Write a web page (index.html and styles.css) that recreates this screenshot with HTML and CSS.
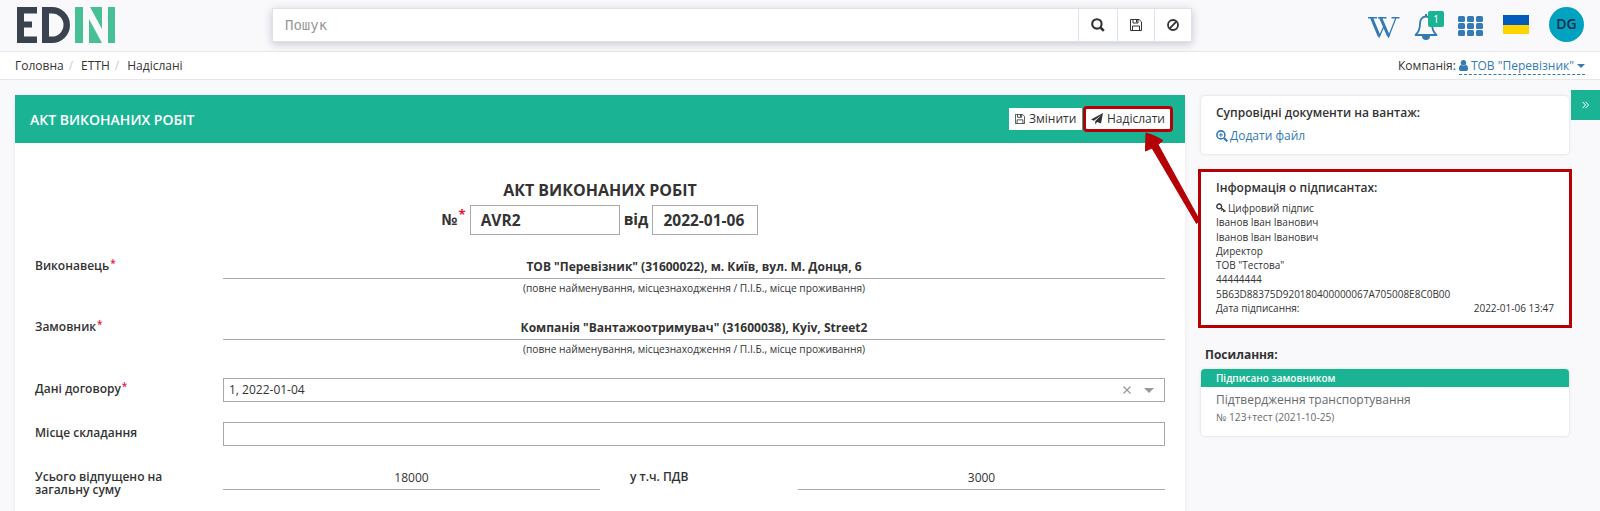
FILE: index.html
```html
<!DOCTYPE html>
<html lang="uk">
<head>
<meta charset="utf-8">
<title>Акт виконаних робіт</title>
<link rel="stylesheet" href="styles.css">
</head>
<body>
<svg class="defs" width="0" height="0">
  <symbol id="floppy" viewBox="0 0 12 12"><path d="M.5.5h8.600l2.400 2.400v8.600h-11zM3 .5v3.500h5v-3.500M2.500 11.500v-4.500h7v4.500" fill="none" stroke="currentColor"/><path d="M6 1h1.300v2.300h-1.300z" fill="currentColor"/></symbol>
</svg>
<header class="top">
  <svg class="logo" viewBox="0 0 98 36" width="98" height="36">
    <path fill="#39424e" d="M0 0h20v6.500h-13v8h8v6h-8v9h13v6.500h-20zM25 0h10a18 18 0 0 1 0 36h-10zM32 6.500v23h3a11.500 11.500 0 0 0 0-23z" fill-rule="evenodd"/>
    <path fill="#48c095" d="M58 0h8v36h-8zM72 12l13 24h-13zM73 0h12v22zM91 0h7v36h-7z"/>
  </svg>
  <div class="search">
    <div class="search-input">Пошук</div>
    <div class="search-btn b1"><svg width="14" height="14" viewBox="0 0 14 14"><circle cx="5.900" cy="5.900" r="4.700" fill="none" stroke="currentColor" stroke-width="2.100"/><path d="M9.500 9.500l3.300 3.300" stroke="currentColor" stroke-width="2.600"/></svg></div>
    <div class="search-btn b2"><svg width="12" height="12"><use href="#floppy"/></svg></div>
    <div class="search-btn b3"><svg width="12" height="12" viewBox="0 0 12 12"><circle cx="6" cy="6" r="5" fill="none" stroke="currentColor" stroke-width="1.800"/><path d="M2.700 9.300l6.600-6.600" stroke="currentColor" stroke-width="1.800"/></svg></div>
  </div>
  <div class="tools">
    <svg class="wiki" width="32" height="21" viewBox="0 0 32 21"><path d="M11.500 19L16.500 8M20.800 19L27.800 1.200" fill="none" stroke="#337ab7" stroke-width="1.300"/><path d="M3.600 1l7.500 18M12.700 1l7.800 18" stroke="#337ab7" stroke-width="3"/><path d="M0 .7h9M10 .7h8.500M23.500 .7h8" stroke="#337ab7" stroke-width="1.400"/><path d="M9.500 17h3.300l-1.400 4h-.6zM19 17h3.300l-1.400 4h-.6z" fill="#337ab7"/></svg>
    <div class="bell">
      <svg width="24" height="26" viewBox="0 0 24 26"><path d="M12 2.500c-4.300 0-6 3.500-6 7.500 0 6-1.800 8.500-4.500 11h21c-2.700-2.500-4.500-5-4.500-11 0-4-1.700-7.500-6-7.500z" fill="none" stroke="#337ab7" stroke-width="1.800" stroke-linejoin="round"/><path d="M12 0v3" stroke="#337ab7" stroke-width="2"/><path d="M8 22h8a4 4 0 0 1-8 0z" fill="#337ab7"/></svg>
      <span class="badge">1</span>
    </div>
    <div class="grid9"><i></i><i></i><i></i><i></i><i></i><i></i><i></i><i></i><i></i></div>
    <div class="flag"></div>
    <div class="avatar">DG</div>
  </div>
</header>
<nav class="crumbs">
  <div class="path"><span>Головна</span><i>/</i><span>ЕТТН</span><i>/</i><span>Надіслані</span></div>
  <div class="company">Компанія:<span class="company-link"><svg width="9" height="11" viewBox="0 0 9 11"><circle cx="4.500" cy="2.800" r="2.700" fill="currentColor"/><path d="M2 4.800q2.500 2 5 0 2 .5 2 3.500v1q0 1.700-1.700 1.700h-5.600q-1.700 0-1.700-1.700v-1q0-3 2-3.500z" fill="currentColor"/></svg>ТОВ "Перевізник"<b class="caret"></b></span></div>
</nav>
<div class="content">
  <main class="doc">
    <div class="doc-head">
      <h1>АКТ ВИКОНАНИХ РОБІТ</h1>
      <div class="btn edit"><svg width="10" height="10"><use href="#floppy"/></svg>Змінити</div>
      <div class="btn send"><svg width="12" height="12" viewBox="0 0 12 12"><path d="M12 0l-2 10.500-3.800-1.500-2 2.600v-3.300l6-6.300-7.200 5.800-3-1.200z" fill="currentColor"/></svg>Надіслати</div>
    </div>
    <div class="doc-title">АКТ ВИКОНАНИХ РОБІТ</div>
    <div class="doc-num"><span>№</span><em>*</em><div class="num">AVR2</div><span>від</span><div class="date">2022-01-06</div></div>
    <div class="row tall"><label>Виконавець<em>*</em></label><div class="cell"><div class="line bold">ТОВ "Перевізник" (31600022), м. Київ, вул. М. Донця, 6</div><div class="hint">(повне найменування, місцезнаходження / П.І.Б., місце проживання)</div></div></div>
    <div class="row tall last"><label>Замовник<em>*</em></label><div class="cell"><div class="line bold">Компанія "Вантажоотримувач" (31600038), Kyiv, Street2</div><div class="hint">(повне найменування, місцезнаходження / П.І.Б., місце проживання)</div></div></div>
    <div class="row mid"><label>Дані договору<em>*</em></label><div class="cell box"><span>1, 2022-01-04</span><svg class="clear" width="8" height="8" viewBox="0 0 8 8"><path d="M.5.5l7 7M7.500.5l-7 7" stroke="#999" stroke-width="1.200"/></svg><b class="drop"></b></div></div>
    <div class="row mid"><label>Місце складання</label><div class="cell box"></div></div>
    <div class="row sums"><label>Усього відпущено на загальну суму</label><div class="line s1">18000</div><label class="vat">у т.ч. ПДВ</label><div class="line s2">3000</div></div>
  </main>
  <aside class="side">
    <section class="card files"><h2>Супровідні документи на вантаж:</h2><div class="add"><svg width="12" height="12" viewBox="0 0 12 12"><circle cx="4.900" cy="4.900" r="4" fill="none" stroke="currentColor" stroke-width="1.600"/><path d="M8 8l3.300 3.300" stroke="currentColor" stroke-width="2.200"/><path d="M2.700 4.900h4.400M4.900 2.700v4.400" stroke="currentColor"/></svg>Додати файл</div></section>
    <section class="card signers"><h2>Інформація о підписантах:</h2>
      <div class="sig"><svg width="10" height="10" viewBox="0 0 10 10"><circle cx="3.200" cy="3.400" r="2.400" fill="none" stroke="currentColor" stroke-width="1.300"/><path d="M5 4.800l4.500 3.700M6.500 6l-1.300 1.500M8.300 7.500l-1 1.500" stroke="currentColor" stroke-width="1.300"/></svg>Цифровий підпис</div>
      <div class="sig">Іванов Іван Іванович</div><div class="sig">Іванов Іван Іванович</div><div class="sig">Директор</div><div class="sig">ТОВ "Тестова"</div><div class="sig">44444444</div><div class="sig">5B63D88375D920180400000067A705008E8C0B00</div><div class="sig when"><span>Дата підписання:</span><span>2022-01-06 13:47</span></div>
    </section>
    <h2 class="links-title">Посилання:</h2>
    <section class="card link"><div class="status">Підписано замовником</div><div class="link-name">Підтвердження транспортування</div><div class="link-num">№ 123+тест (2021-10-25)</div></section>
  </aside>
</div>
<div class="toggle"><svg width="7" height="8" viewBox="0 0 7 8"><path d="M.5.8l3 3.200-3 3.200M3.500.8l3 3.200-3 3.200" fill="none" stroke="#fff"/></svg></div>
<svg class="arrow" width="70" height="100" viewBox="0 0 70 100"><path d="M6 2q8 2 17 7.500l-5 4L59.500 89l-3 3.500L12 17l-6.500 3z" fill="#b50006" stroke="#b50006" stroke-linejoin="round"/></svg>
</body>
</html>
```
FILE: styles.css
```css
* { box-sizing: border-box; }
body { margin: 0; width: 1600px; height: 511px; overflow: hidden; position: relative; background: #f9f9fb; color: #333; font: 12px/18px "Open Sans", "Noto Sans", sans-serif; }
svg { display: block; flex: none; }
.defs { position: absolute; }
em { color: #e6123d; font-style: normal; }
h1, h2 { margin: 0; }
.top { height: 52px; border-bottom: 1px solid #e7e7ea; display: flex; padding-left: 17px; }
.logo { margin-top: 7px; }
.search { margin: 8px 0 0 157px; width: 920px; height: 34px; display: flex; background: #fff; border: 1px solid #e1e2e7; box-shadow: 0 2px 8px rgba(60,70,110,.28); }
.search-input { flex: 1; padding-left: 12px; font: 14px/32px "DejaVu Sans Mono", monospace; color: #999; }
.search-btn { border-left: 1px solid #e1e2e7; display: flex; align-items: center; justify-content: center; }
.b1 { width: 39px; }
.b2 { width: 37px; }
.b3 { width: 37px; }
.tools { display: flex; margin-left: 176px; }
.wiki { margin-top: 17px; }
.bell { margin: 14px 0 0 14px; position: relative; width: 29px; height: 28px; }
.badge { position: absolute; left: 14px; top: -3px; width: 16px; height: 16px; border-radius: 2px; background: #1ab394; color: #fff; font-size: 10px; line-height: 16px; text-align: center; }
.grid9 { display: grid; grid-template-columns: repeat(3, 7px); grid-auto-rows: 6px; gap: 1px 2px; margin: 16px 0 0 15px; align-content: start; }
.grid9 i { border-radius: 1.500px; background: #337ab7; }
.flag { width: 26px; height: 19px; margin: 15px 0 0 20px; background: linear-gradient(#005bbb 10px, #ffd500 10px); }
.avatar { width: 35px; height: 35px; border-radius: 50%; background: #00a3bf; color: #172b4d; font: 600 14px/34px "Open Sans", sans-serif; text-align: center; margin: 7px 0 0 20px; }
.crumbs { height: 28px; border-bottom: 1px solid #e7e7ea; background: #fff; display: flex; justify-content: space-between; padding: 5px 15px 0; }
.path i { font-style: normal; color: #ccc; padding: 0 8px 0 5px; }
.company { display: flex; }
.company-link { color: #337ab7; display: flex; align-items: center; height: 18px; border-bottom: 1px dashed #337ab7; margin-left: 3px; }
.company-link svg { margin-right: 3px; }
.caret { border: 4px solid transparent; border-top-color: #337ab7; border-bottom: 0; margin-left: 3px; }
.content { display: flex; padding: 15px 0 0 15px; gap: 16px; }
.doc { width: 1170px; height: 416px; background: #fff; box-shadow: 0 1px 4px rgba(0,0,0,.08); }
.doc-head { height: 48px; background: #1ab394; display: flex; align-items: center; padding: 0 15px; }
.doc-head h1 { font: 600 14px/20px "Open Sans", sans-serif; color: #fff; flex: 1; padding-top: 1px; }
.btn { background: #fff; height: 22px; display: flex; align-items: center; line-height: 20px; }
.edit { width: 73px; padding-left: 6px; gap: 4px; }
.send { width: 86px; margin: 0 -1px 0 3px; padding-left: 6px; gap: 4px; outline: 3px solid #b50006; outline-offset: -1px; border-radius: 2px; }
.doc-title { margin-top: 36px; text-align: center; font: 700 16px/22px "Open Sans", sans-serif; }
.doc-num { display: flex; justify-content: center; margin-top: 4px; font: 700 15.500px/29px "Open Sans", sans-serif; }
.doc-num em { line-height: 18px; margin: 0 4px 0 1px; font-size: 13px; }
.num, .date { border: 1px solid #aaa; height: 30px; line-height: 28px; padding-left: 10px; }
.num { width: 150px; margin-right: 4px; }
.date { width: 106px; margin-left: 4px; }
.row { display: flex; padding: 0 20px; }
.row label { width: 188px; font-weight: 600; line-height: 13px; }
.row em { position: relative; top: -3px; margin-left: 1px; font-size: 10px; }
.tall { height: 61px; }
.tall.last { height: 58px; }
.doc-num + .tall { margin-top: 24px; }
.cell { width: 942px; }
.line { border-bottom: 1px solid #aaa; height: 20px; text-align: center; line-height: 16px; }
.bold { font-weight: 700; }
.hint { font-size: 10.200px; line-height: 18px; text-align: center; }
.mid { height: 44px; }
.mid label { padding-top: 4px; }
.box { height: 24px; border: 1px solid #aaa; display: flex; align-items: center; padding: 0 10px 0 5px; }
.box span { flex: 1; line-height: 22px; }
.drop { border: 5px solid transparent; border-top-color: #999; border-bottom: 0; margin-left: 13px; }
.sums label { width: 188px; padding-top: 4px; padding-right: 50px; }
.s1 { width: 377px; height: 24px; line-height: 24px; }
.sums .vat { width: 198px; padding-left: 30px; }
.s2 { width: 367px; height: 24px; line-height: 24px; }
.side { width: 369px; }
.card { background: #fff; border-radius: 4px; box-shadow: 0 0 3px rgba(0,0,0,.16); }
h2 { font-size: 12px; line-height: 18px; font-weight: 600; }
.files { height: 58px; width: 368px; padding: 8px 15px; margin-top: 1px; }
.add { color: #337ab7; display: flex; align-items: center; gap: 2px; margin-top: 5px; }
.signers { height: 153px; width: 368px; padding: 7px 15px 0 15px; margin-top: 18px; outline: 3px solid #b50006; outline-offset: -.5px; border-radius: 0; }
.signers h2 { margin-bottom: 4px; }
.sig { font-size: 10px; line-height: 14.300px; display: flex; align-items: center; gap: 2px; }
.when { justify-content: space-between; }
.links-title { margin: 21px 0 5px 4px; font-weight: 700; }
.link { height: 67px; width: 368px; overflow: hidden; }
.status { background: #1ab394; color: #fff; font-size: 10px; font-weight: 600; line-height: 18px; padding-left: 15px; }
.link-name { padding: 4px 15px 0; color: #676a6c; }
.link-num { padding: 0 15px; color: #676a6c; font-size: 10.200px; line-height: 17px; }
.toggle { position: absolute; right: 0; top: 90px; width: 29px; height: 30px; background: #1ab394; display: flex; align-items: center; justify-content: center; }
.arrow { position: absolute; left: 1140px; top: 131px; }
```
